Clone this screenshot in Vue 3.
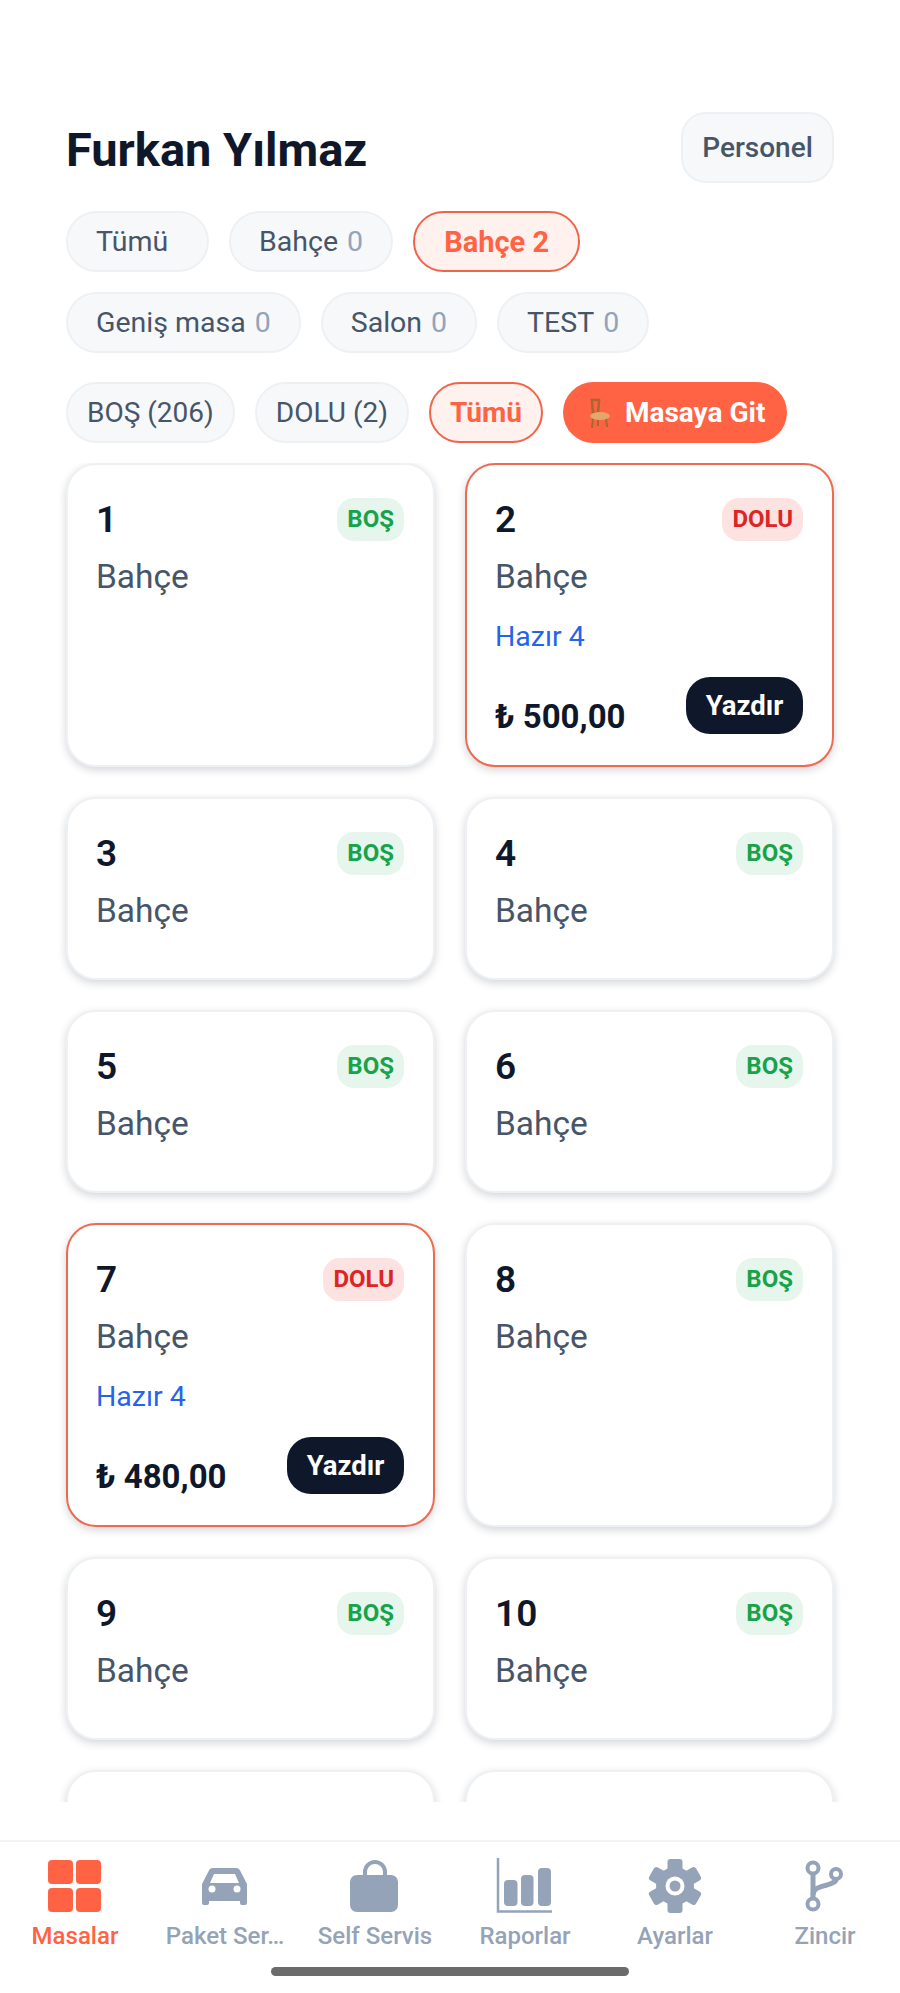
<script setup>
const areas = [
  [{ name: 'Tümü', count: '', empty: true }, { name: 'Bahçe', count: 0 }, { name: 'Bahçe 2', active: true }],
  [{ name: 'Geniş masa', count: 0 }, { name: 'Salon', count: 0 }, { name: 'TEST', count: 0 }]
]

// last two are only peeking out above the tab bar
const tables = [
  { id: 1, no: 1 },
  { id: 2, no: 2, total: '500,00' },
  { id: 3, no: 3 },
  { id: 4, no: 4 },
  { id: 5, no: 5 },
  { id: 6, no: 6 },
  { id: 7, no: 7, total: '480,00' },
  { id: 8, no: 8 },
  { id: 9, no: 9 },
  { id: 10, no: 10 },
  { id: 11 },
  { id: 12 }
]

const tabs = [
  { key: 'grid', label: 'Masalar', active: true },
  { key: 'car', label: 'Paket Ser…' },
  { key: 'bag', label: 'Self Servis' },
  { key: 'chart', label: 'Raporlar' },
  { key: 'gear', label: 'Ayarlar' },
  { key: 'branch', label: 'Zincir' }
]

const gearTeeth = [0, 60, 120]
</script>

<template>
  <div class="page">
    <header class="top">
      <h1 class="title">Furkan Yılmaz</h1>
      <button class="staff">Personel</button>
    </header>

    <div class="area-filters">
      <div v-for="(row, i) in areas" :key="i" class="chip-row">
        <span
          v-for="chip in row"
          :key="chip.name"
          class="chip area-chip"
          :class="{ active: chip.active }"
        >
          {{ chip.name }}
          <span v-if="!chip.active" class="count" :class="{ blank: chip.empty }">{{ chip.count }}</span>
        </span>
      </div>
    </div>

    <div class="chip-row status-row">
      <span class="chip">BOŞ (206)</span>
      <span class="chip">DOLU (2)</span>
      <span class="chip active">Tümü</span>
      <button class="go-btn">
        <svg class="chair" viewBox="0 0 22 30" width="22" height="30">
          <path d="M3 2h7v2l-1 11H4L3 4z" fill="none" stroke="#a8672f" stroke-width="2.500" />
          <path d="M4 20l-1 10M17 20l1 9M9 20l0 8" stroke="#a8672f" stroke-width="2" />
          <ellipse cx="11" cy="18" rx="10" ry="4" fill="#e3a76c" />
        </svg>
        Masaya Git
      </button>
    </div>

    <div class="table-scroll">
      <div class="table-grid">
        <div v-for="t in tables" :key="t.id" class="card" :class="{ busy: t.total }">
          <template v-if="t.no">
            <div class="card-head">
              <span class="no">{{ t.no }}</span>
              <span class="badge" :class="t.total ? 'badge-busy' : 'badge-free'">{{ t.total ? 'DOLU' : 'BOŞ' }}</span>
            </div>
            <div class="area">Bahçe</div>
          </template>
          <template v-if="t.total">
            <div class="ready">Hazır 4</div>
            <div class="card-foot">
              <span class="price">₺ {{ t.total }}</span>
              <button class="print">Yazdır</button>
            </div>
          </template>
        </div>
      </div>
    </div>

    <nav class="tabbar">
      <div v-for="tab in tabs" :key="tab.key" class="tab" :class="{ on: tab.active }">
        <svg class="tab-icon" viewBox="0 0 60 60" width="60" height="60">
          <g v-if="tab.key === 'grid'" fill="#ff6344">
            <rect x="3" y="4" width="25" height="24" rx="4" />
            <rect x="31" y="4" width="25" height="24" rx="4" />
            <rect x="3" y="32" width="25" height="24" rx="4" />
            <rect x="31" y="32" width="25" height="24" rx="4" />
          </g>
          <g v-else-if="tab.key === 'car'">
            <path
              fill="#94a3b8"
              fill-rule="evenodd"
              d="M18 12h23c2 0 3.600 1 4.300 3L52 28v19a2 2 0 0 1-2 2h-3a2 2 0 0 1-2-2v-2H14v2a2 2 0 0 1-2 2H9a2 2 0 0 1-2-2V28l6.700-13c.7-2 2.300-3 4.300-3ZM19 18h21l4 9H15Z"
            />
            <circle cx="17" cy="33" r="3.500" fill="#fff" />
            <circle cx="42" cy="33" r="3.500" fill="#fff" />
          </g>
          <g v-else-if="tab.key === 'bag'">
            <path d="M20 21v-5a10 10 0 0 1 20 0v5" fill="none" stroke="#94a3b8" stroke-width="4" />
            <rect x="5" y="19" width="48" height="37" rx="7" fill="#94a3b8" />
          </g>
          <g v-else-if="tab.key === 'chart'">
            <path d="M3 2v53.500h54" fill="none" stroke="#94a3b8" stroke-width="2.500" />
            <rect x="9" y="24" width="13.500" height="26" rx="4" fill="#94a3b8" />
            <rect x="26" y="19" width="12.500" height="31" rx="4" fill="#94a3b8" />
            <rect x="43" y="12" width="13" height="38" rx="4" fill="#94a3b8" />
          </g>
          <g v-else-if="tab.key === 'gear'">
            <rect
              v-for="deg in gearTeeth"
              :key="deg"
              x="22.500"
              y="3"
              width="15"
              height="54"
              rx="3"
              fill="#94a3b8"
              :transform="`rotate(${deg} 30 30)`"
            />
            <circle cx="30" cy="30" r="19" fill="#94a3b8" />
            <circle cx="30" cy="30" r="9.500" fill="#fff" />
            <circle cx="30" cy="30" r="5.500" fill="#94a3b8" />
          </g>
          <g v-else fill="none" stroke="#94a3b8">
            <path d="M18 18v24" stroke-width="5" />
            <path d="M18 39c0-7 7-8 14-10 6-2 9-3 9-6" stroke-width="5" />
            <circle cx="18" cy="12" r="5.500" stroke-width="4" />
            <circle cx="41" cy="18" r="5" stroke-width="4" />
            <circle cx="18" cy="48" r="5.500" stroke-width="4" />
          </g>
        </svg>
        <span class="tab-label">{{ tab.label }}</span>
      </div>
    </nav>

    <div class="home-bar"></div>
  </div>
</template>

<style>
html, body {
  margin: 0;
  background: #fff;
}
</style>

<style scoped>
.page {
  position: relative;
  height: 1993px;
  display: flex;
  flex-direction: column;
  box-sizing: border-box;
  padding-top: 112px;
  overflow: hidden;
  background: #fff;
  font-family: Roboto, "Liberation Sans", sans-serif;
  color: #0f172a;
}
button {
  font-family: inherit;
  cursor: pointer;
}
.top {
  display: flex;
  align-items: center;
  justify-content: space-between;
  padding: 0 66px;
}
.title {
  margin: 4px 0 0;
  font-size: 47px;
  font-weight: 700;
  line-height: 67px;
  color: #0f172a;
}
.staff {
  width: 153px;
  height: 71px;
  border: 2px solid #eef1f4;
  border-radius: 25px;
  background: #f6f8fa;
  color: #475569;
  font-size: 28px;
  font-weight: 500;
}
.area-filters {
  display: flex;
  flex-direction: column;
  gap: 20px;
  margin-top: 28px;
  padding: 0 66px;
}
.chip-row {
  display: flex;
  gap: 20px;
}
.status-row {
  margin-top: 29px;
  padding: 0 66px;
}
.chip {
  display: inline-flex;
  align-items: center;
  box-sizing: border-box;
  height: 61px;
  padding: 0 19px;
  border: 2px solid #eef1f4;
  border-radius: 31px;
  background: #f6f8fa;
  color: #475569;
  font-size: 28px;
  white-space: nowrap;
}
.area-chip {
  padding: 0 28px;
  font-size: 28.500px;
}
.area-chip.active {
  padding: 0 29px;
  font-size: 29px;
}
.chip.active {
  border: 2.500px solid #f0654a;
  background: #fff1ed;
  color: #ff6344;
  font-weight: 700;
}
.count {
  margin-left: 9px;
  color: #94a3b8;
}
.count.blank {
  min-width: 11px;
  margin-left: 0;
}
.go-btn {
  display: inline-flex;
  align-items: center;
  gap: 14px;
  height: 61px;
  padding: 0 22px 0 26px;
  border: 0;
  border-radius: 31px;
  background: #ff6344;
  color: #fff;
  font-size: 28px;
  font-weight: 700;
}
.table-scroll {
  height: 1339px;
  margin-top: 20px;
  padding: 0 66px;
  overflow: hidden;
}
.table-grid {
  display: grid;
  grid-template-columns: 369px 369px;
  column-gap: 30px;
  row-gap: 30px;
}
.card {
  display: flex;
  flex-direction: column;
  box-sizing: border-box;
  min-height: 183px;
  padding: 33px 29px 31px 28px;
  border: 2px solid #eef1f4;
  border-radius: 30px;
  background: #fff;
  box-shadow: 0 3px 8px rgba(15, 23, 42, 0.18);
}
.card.busy {
  border: 2.500px solid #ee6a50;
}
.card-head {
  display: flex;
  align-items: center;
  justify-content: space-between;
  height: 42px;
}
.no {
  font-size: 37px;
  font-weight: 600;
  color: #0f172a;
}
.badge {
  height: 43px;
  padding: 0 10px;
  border-radius: 17px;
  font-size: 24px;
  font-weight: 700;
  line-height: 43px;
}
.badge-free {
  background: #e7f6ec;
  color: #16a34a;
}
.badge-busy {
  background: #fde2e2;
  color: #dc2626;
}
.area {
  margin-top: 17px;
  font-size: 33.500px;
  line-height: 40px;
  color: #475569;
}
.ready {
  margin-top: 23px;
  font-size: 28.500px;
  line-height: 34px;
  color: #2563eb;
}
.card-foot {
  display: flex;
  align-items: flex-end;
  justify-content: space-between;
  margin-top: 23px;
}
.price {
  position: relative;
  top: 1px;
  font-size: 33px;
  font-weight: 700;
  line-height: 36px;
  color: #0f172a;
}
.print {
  width: 117px;
  height: 57px;
  border: 0;
  border-radius: 24px;
  background: #0f172a;
  color: #fff;
  font-size: 27.500px;
  font-weight: 700;
}
.tabbar {
  display: grid;
  grid-template-columns: repeat(6, 150px);
  margin-top: 38px;
  padding-top: 14px;
  border-top: 2px solid #f1f3f5;
}
.tab {
  display: flex;
  flex-direction: column;
  align-items: center;
  gap: 5px;
  min-width: 0;
  color: #94a3b8;
}
.tab.on {
  color: #ff6344;
}
.tab-label {
  font-size: 24px;
  font-weight: 500;
  line-height: 30px;
  text-align: center;
  white-space: nowrap;
}
.home-bar {
  position: absolute;
  left: 271px;
  bottom: 17px;
  width: 358px;
  height: 9px;
  border-radius: 5px;
  background: #6b6b6b;
}
</style>
